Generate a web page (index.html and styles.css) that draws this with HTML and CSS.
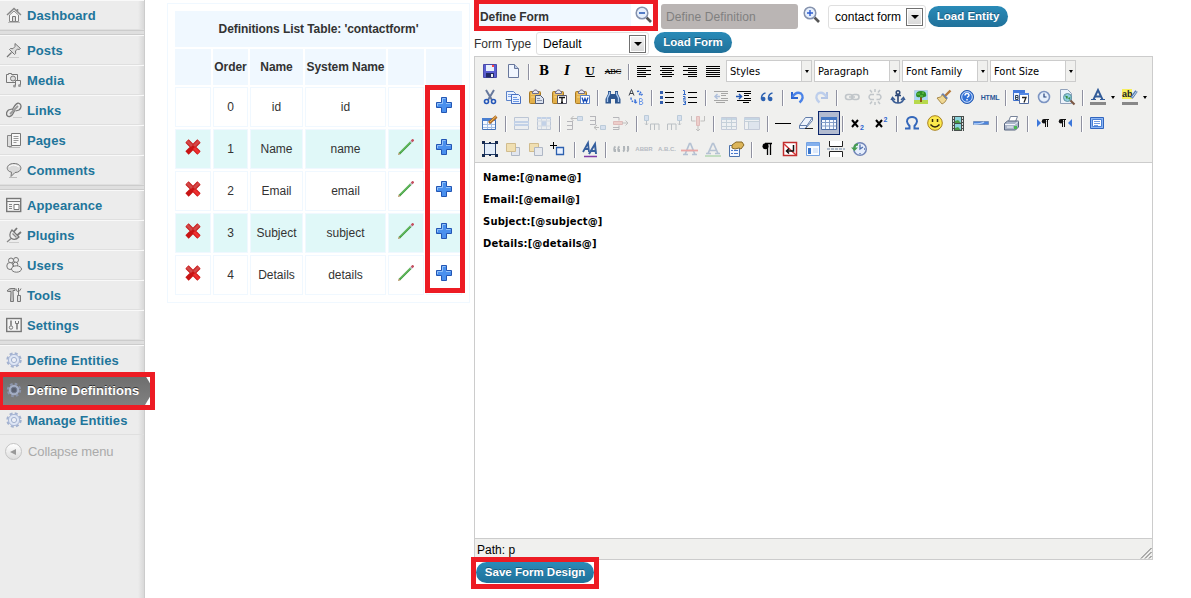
FILE: index.html
```html
<!DOCTYPE html>
<html lang="en">

<head>
    <meta charset="UTF-8">
    <title>Define Definitions</title>
    <link rel="stylesheet" href="styles.css">
</head>

<body>
    <svg class="defs">
        <symbol id="gear" viewBox="0 0 16 16">
            <circle cx="8" cy="8" r="6.5" fill="none" stroke="#a3b2d0" stroke-width="2.4" stroke-dasharray="2.9 2.2"/>
            <circle cx="8" cy="8" r="5.6" fill="#dde5f4" stroke="#a9b7d6"/>
            <circle cx="8" cy="8" r="2.6" fill="#eceff6" stroke="#a3b1cf"/>
        </symbol>
        <symbol id="del" viewBox="0 0 16 16">
            <path d="M2 2L14 14M14 2L2 14" stroke="#c81414" stroke-width="4.6"/>
            <path d="M2 2L7 7M14 2L9 7" stroke="#d24848" stroke-width="3"/>
            <path d="M9 9L14 14" stroke="#ee3030" stroke-width="3"/>
        </symbol>
        <symbol id="pencil" viewBox="0 0 16 16">
            <path d="M1.500 14.500L13 3" stroke="#3c9c3c" stroke-width="2.200"/>
            <path d="M2 13.500L12.500 3" stroke="#8fd684" stroke-width=".8"/>
            <path d="M12.500 3.500L14 2" stroke="#bfc5cf" stroke-width="2.400"/>
            <path d="M13.700 2.300L15.500 .5" stroke="#c65060" stroke-width="2.400"/>
            <path d="M0 16L.8 13.500 2.500 15.200Z" fill="#a98850"/>
        </symbol>
        <symbol id="plus" viewBox="0 0 16 16">
            <path d="M5.500 .5h5v5h5v5h-5v5h-5v-5h-5v-5h5z" fill="#4a90ee" stroke="#2356b4"/>
            <path d="M6.500 1.500h3M6.500 1.500v5h-5v2.500M10 6.500h4.500" fill="none" stroke="#92c1f8"/>
        </symbol>
        <symbol id="clip" viewBox="0 0 20 20">
            <rect x="3.500" y="4.500" width="11" height="12" rx="1" fill="#e3b04a" stroke="#a97a23"/>
            <path d="M5 7h8M5 10h4" stroke="#f8db8c"/>
            <path d="M6.500 6.500v-2h1l1-1.500h2l1 1.500h1v2z" fill="#e9e9f2" stroke="#706c88"/>
        </symbol>
    </svg>

    <div class="page">
        <div class="menu">
            <div class="item"><svg viewBox="0 0 16 16"><path d="M1 8L8 1.500 15 8M11.500 2v3" fill="none" stroke="#888" stroke-width="1.500"/><path d="M3.500 8L8 4 12.500 8v6.500h-9z" fill="#f5f5f5" stroke="#888"/><path d="M6.500 14V9.500h3V14" fill="#ddd" stroke="#777"/><path d="M2 15.500h12" stroke="#bbb"/></svg>Dashboard</div>
            <div class="sep"></div>
            <div class="item"><svg viewBox="0 0 16 16"><path d="M9 1.500l5.500 5-1.500 1-1.500-.5-2 2 .2 2.500-1.200 1L3.500 7.500l1-1 2.500.2L9 4.500z" fill="#ddd" stroke="#777"/><path d="M5.500 10.500L1 15" stroke="#777" stroke-width="1.300"/><path d="M3 15.500h10" stroke="#ccc"/></svg>Posts</div>
            <div class="item"><svg viewBox="0 0 16 16"><path d="M.5 2.500h2v-1h3v1h6v8h-11z" fill="#eee" stroke="#777"/><circle cx="7" cy="6.500" r="2.500" fill="#ddd" stroke="#777"/><path d="M9.500 14V8.500h5V13" fill="#eee" stroke="#777"/><circle cx="8.500" cy="14" r="1.500" fill="#999"/><circle cx="13.500" cy="13.500" r="1.500" fill="#999"/></svg>Media</div>
            <div class="item"><svg viewBox="0 0 16 16"><g fill="none"><path d="M6 8L9 3.500q3-4 5.500-1 1.500 3-1.500 5.500l-3.500 1" stroke="#777" stroke-width="1.300"/><path d="M9 8l-2.500 4.500q-3 3.500-5.500 1-1.500-3 1.500-5.500l3.500-1" stroke="#777" stroke-width="1.300"/><path d="M4 12l8-8" stroke="#999" stroke-width="1.800"/></g><path d="M7 15.500h9" stroke="#ccc"/></svg>Links</div>
            <div class="item"><svg viewBox="0 0 16 16"><path d="M1.500 3.500h4v11h-4z" fill="#ddd" stroke="#888"/><path d="M5.500 1.500h9v12h-9z" fill="#f8f8f8" stroke="#777"/><path d="M7.500 4.500h5M7.500 6.500h5M7.500 8.500h5M7.500 10.500h3" stroke="#999"/><path d="M3 15.500h11" stroke="#bbb"/></svg>Pages</div>
            <div class="item"><svg viewBox="0 0 16 16"><path d="M8 1.500c9 0 9 9 1 9L5 14.500l.5-4.300C-1 9 0 1.500 8 1.500z" fill="#dadada" stroke="#777"/><path d="M3 5q4-4 10 0" stroke="#fff" fill="none"/><path d="M3 15.500h8" stroke="#bbb"/></svg>Comments</div>
            <div class="sep"></div>
            <div class="item"><svg viewBox="0 0 16 16"><rect x=".7" y="1.500" width="14" height="13" fill="#f4f4f4" stroke="#777" stroke-width="1.400"/><path d="M1 4.500h14" stroke="#777"/><path d="M3 7.500h3M3 9.500h3M3 11.500h3" stroke="#888"/><path d="M8 7.500h5v5h-5z" fill="#fff" stroke="#777"/></svg>Appearance</div>
            <div class="item"><svg viewBox="0 0 16 16"><path d="M6 3l7 7c-2 2-5 3-7.500 1.500S3.500 6 6 3z" fill="#eee" stroke="#777" stroke-width="1.200"/><path d="M7.500 5L11 1M11 8.500L15 5" stroke="#777" stroke-width="1.800"/><path d="M6.500 6.500l4 4M5 11.500L1 15" stroke="#888" stroke-width="1.300"/><path d="M3 15.500h10" stroke="#ccc"/></svg>Plugins</div>
            <div class="item"><svg viewBox="0 0 16 16"><g fill="#eee" stroke="#777"><circle cx="5" cy="3.500" r="2.500"/><circle cx="10" cy="3" r="2.500"/><ellipse cx="4" cy="9" rx="3.200" ry="3.500"/><circle cx="9.500" cy="7.500" r="2.300"/><ellipse cx="10.500" cy="12" rx="5" ry="3.200"/></g></svg>Users</div>
            <div class="item"><svg viewBox="0 0 16 16"><path d="M1 4q1.500-2.500 4-2.500h4v2H7l.5 11h-3L5 4.500H3z" fill="#c8c8c8" stroke="#777"/><path d="M10 1.500q0 3 2 3t3-3M12.500 1v7" fill="none" stroke="#777"/><path d="M11.500 8.500h3v6h-3z" fill="#ddd" stroke="#777"/></svg>Tools</div>
            <div class="item"><svg viewBox="0 0 16 16"><rect x=".7" y="1.500" width="14.500" height="13" fill="#f4f4f4" stroke="#777" stroke-width="1.400"/><path d="M5 3.500v5M11 7v5.500" stroke="#777" stroke-width="1.500"/><circle cx="5" cy="10.500" r="1.700" fill="none" stroke="#777"/><path d="M9.500 4v2.500h3V4" fill="none" stroke="#777"/></svg>Settings</div>
            <div class="sep"></div>
            <div class="item"><svg><use href="#gear"/></svg>Define Entities</div>
            <div class="item active"><svg viewBox="0 0 16 16"><circle cx="8" cy="8" r="6.200" fill="none" stroke="#8a93ab" stroke-width="2" stroke-dasharray="2.700 2.170"/><circle cx="8" cy="8" r="5.300" fill="#a3adc4"/><circle cx="8" cy="8" r="2.800" fill="#5a6070" stroke="#70798c"/></svg>Define Definitions</div>
            <div class="item"><svg><use href="#gear"/></svg>Manage Entities</div>
            <div class="collapse"><span class="round"></span>Collapse menu</div>
            <div class="mark mark-menu"></div>
        </div>

        <div class="list">
            <table>
                <colgroup><col class="c1"><col class="c2"><col class="c3"><col class="c4"><col class="c1"><col class="c1"></colgroup>
                <tr><th colspan="6">Definitions List Table: 'contactform'</th></tr>
                <tr><th></th><th>Order</th><th>Name</th><th>System Name</th><th></th><th></th></tr>
                <tr><td></td><td>0</td><td>id</td><td>id</td><td></td><td><svg><use href="#plus"/></svg></td></tr>
                <tr class="alt"><td><svg><use href="#del"/></svg></td><td>1</td><td>Name</td><td>name</td><td><svg><use href="#pencil"/></svg></td><td><svg><use href="#plus"/></svg></td></tr>
                <tr><td><svg><use href="#del"/></svg></td><td>2</td><td>Email</td><td>email</td><td><svg><use href="#pencil"/></svg></td><td><svg><use href="#plus"/></svg></td></tr>
                <tr class="alt"><td><svg><use href="#del"/></svg></td><td>3</td><td>Subject</td><td>subject</td><td><svg><use href="#pencil"/></svg></td><td><svg><use href="#plus"/></svg></td></tr>
                <tr><td><svg><use href="#del"/></svg></td><td>4</td><td>Details</td><td>details</td><td><svg><use href="#pencil"/></svg></td><td><svg><use href="#plus"/></svg></td></tr>
            </table>
            <div class="mark mark-add"></div>
        </div>

        <div class="main">
            <div class="line top">
                <div class="define"><span>Define Form</span><svg viewBox="0 0 18 18"><path d="M11.500 11.500L16 16" stroke="#555" stroke-width="2.600"/><circle cx="7" cy="7" r="5.800" fill="#e6effc" stroke="#8592ad" stroke-width="1.500"/><path d="M4 7h6" stroke="#2f5fb8" stroke-width="1.600"/></svg></div>
                <div class="disabled">Define Definition</div>
                <svg class="zoom" viewBox="0 0 18 18"><path d="M11.500 11.500L16 16" stroke="#555" stroke-width="2.600"/><circle cx="7" cy="7" r="5.800" fill="#e6effc" stroke="#8592ad" stroke-width="1.500"/><path d="M4 7h6M7 4v6" stroke="#2f5fd0" stroke-width="1.400"/></svg>
                <div class="select entity">contact form<span class="drop"></span></div>
                <div class="button b-entity">Load Entity</div>
            </div>
            <div class="line second">
                <span class="label">Form Type</span>
                <div class="select type">Default<span class="drop"></span></div>
                <div class="button b-form">Load Form</div>
            </div>

            <div class="editor">
                <div class="toolbar">
                    <div class="row">
                        <svg viewBox="0 0 20 20"><path d="M3.500 3.500h13v13h-13z" fill="#5a5ed0" stroke="#4a4aa8"/><path d="M6 4h8v6H6z" fill="#e8f0fc"/><path d="M12 4h2v2h-2z" fill="#f44"/><path d="M6 12h8v4.500H6z" fill="#222a66"/><path d="M11 13h2v3h-2z" fill="#eee"/></svg>
                        <svg viewBox="0 0 20 20"><path d="M5.500 3.500h6l4 4v9h-10z" fill="#f1f6fe" stroke="#68779b"/><path d="M11.500 3.500v4h4" fill="#bccce8" stroke="#68779b"/></svg>
                        <i></i>
                        <b class="ch serif">B</b><b class="ch serif it">I</b><b class="ch serif un">U</b><b class="ch strike">ABC</b>
                        <i></i>
                        <svg viewBox="0 0 20 20"><path d="M3 5.500h14M3 7.500h9M3 9.500h14M3 11.500h9M3 13.500h14M3 15.500h9" stroke="#000"/></svg>
                        <svg viewBox="0 0 20 20"><path d="M3 5.500h14M5 7.500h10M3 9.500h14M5 11.500h10M3 13.500h14M5 15.500h10" stroke="#000"/></svg>
                        <svg viewBox="0 0 20 20"><path d="M3 5.500h14M8 7.500h9M3 9.500h14M8 11.500h9M3 13.500h14M8 15.500h9" stroke="#000"/></svg>
                        <svg viewBox="0 0 20 20"><path d="M3 5.500h14M3 7.500h14M3 9.500h14M3 11.500h14M3 13.500h14M3 15.500h14" stroke="#000"/></svg>
                        <div class="lb">Styles</div><div class="lb">Paragraph</div><div class="lb">Font Family</div><div class="lb">Font Size</div>
                    </div>
                    <div class="row">
                        <svg viewBox="0 0 20 20"><path d="M6 3l6 10M14 3L8 13" stroke="#66789c" stroke-width="2"/><circle cx="6.500" cy="14.500" r="2" fill="none" stroke="#2456b8" stroke-width="1.600"/><circle cx="13.500" cy="14.500" r="2" fill="none" stroke="#2456b8" stroke-width="1.600"/></svg>
                        <svg viewBox="0 0 20 20"><path d="M3.500 4.500h7l2 2v7h-9z" fill="#eaf2ff" stroke="#5a82c8"/><path d="M5 7.500h5M5 9.500h4" stroke="#7ba2e6"/><path d="M8.500 7.500h7l2 2v7h-9z" fill="#eaf2ff" stroke="#4870c0"/><path d="M10 10.500h4M10 12.500h6M10 14.500h6" stroke="#6d98e4"/></svg>
                        <svg viewBox="0 0 20 20"><use href="#clip"/><path d="M9.500 8.500h5l3 3v5h-8z" fill="#dde4f0" stroke="#4f5b78"/><path d="M11 11.500h3M11 13.500h5" stroke="#8792a8"/></svg>
                        <svg viewBox="0 0 20 20"><use href="#clip"/><path d="M8.500 8.500h9v8h-9z" fill="#fff" stroke="#556"/><path d="M10 10.500h6M13 10.500v5M12 15.500h2" stroke="#111" stroke-width="1.300"/></svg>
                        <svg viewBox="0 0 20 20"><use href="#clip"/><path d="M8.500 8.500h9v8h-9z" fill="#fff" stroke="#5b83c8"/><path d="M10 10.500l1.500 4.500 1.500-3.500 1.500 3.500 1.500-4.500" fill="none" stroke="#1a4fb8" stroke-width="1.300"/></svg>
                        <i></i>
                        <svg viewBox="0 0 20 20"><path d="M5 4h3v3h4V4h3v3l2.500 5v4.500h-5.500V12H8v4.500H2.500V12L5 7z" fill="#2d568f"/><path d="M6.500 5v2L4.500 11v4M13.500 5v2l2 4v4" fill="none" stroke="#a7c6ee" stroke-width="1.300"/></svg>
                        <svg viewBox="0 0 20 20"><path d="M3 8.500L5.500 2.500 8 8.500M4 6.500h3" stroke="#3d434d" fill="none"/><path d="M13.500 11.500v6h2.500q2-1.500 0-3h-2.500 2q2-1.500 0-3z" fill="none" stroke="#6f9ae8"/><path d="M11 4.500q4-1 4 3M13 6.500l2 2 2-2M5 10.500q0 5 5 4.500M8.500 12.500l2 2.500-2 2" fill="none" stroke="#3970d8" stroke-width="1.400" stroke-dasharray="2 1"/></svg>
                        <i></i>
                        <svg viewBox="0 0 20 20"><path d="M8 5.500h9M8 10.500h9M8 15.500h9" stroke="#000"/><path d="M3 4h3v3H3zM3 9h3v3H3zM3 14h3v3H3z" fill="#345fae"/></svg>
                        <svg viewBox="0 0 20 20"><path d="M8 5.500h9M8 10.500h9M8 15.500h9" stroke="#000"/><path d="M3 3.500h1.500v4M3 7.500h3M3 9.500h2v1.500l-2 1h3M3 14h2.500v3.500H3M4 15.700h1" fill="none" stroke="#346ac8"/></svg>
                        <i></i>
                        <svg class="off" viewBox="0 0 20 20"><path d="M3 4.500h14M10 6.500h7M10 8.500h5M10 11.500h7M3 13.500h14M5 15.500h9" stroke="#000"/><path d="M9 9.500H4M6.500 7L4 9.500 6.500 12" fill="none" stroke="#2459b5" stroke-width="1.500"/></svg>
                        <svg viewBox="0 0 20 20"><path d="M3 4.500h14M10 6.500h7M10 8.500h5M10 11.500h7M3 13.500h14M9 15.500h6" stroke="#000" stroke-width="1.200"/><path d="M2 9.500h5M5 7l2.500 2.500L5 12" fill="none" stroke="#2459b5" stroke-width="1.500"/></svg>
                        <svg viewBox="0 0 20 20"><path d="M8.500 6Q4 7 4.500 12.500M15.500 6Q11 7 11.500 12.500" fill="none" stroke="#2d62b2" stroke-width="1.400"/><circle cx="6.300" cy="12" r="2.200" fill="#2d62b2"/><circle cx="13.300" cy="12" r="2.200" fill="#2d62b2"/></svg>
                        <i></i>
                        <svg viewBox="0 0 20 20"><path d="M4 5v6h6" fill="none" stroke="#2c65d2" stroke-width="2"/><path d="M4.500 10Q8 4 13 6.500q4 4-1.500 9" fill="none" stroke="#4b83e8" stroke-width="2.400"/></svg>
                        <svg class="off" viewBox="0 0 20 20"><path d="M16 5v6h-6" fill="none" stroke="#2c65d2" stroke-width="2"/><path d="M15.500 10Q12 4 7 6.500q-4 4 1.500 9" fill="none" stroke="#4b83e8" stroke-width="2.400"/></svg>
                        <i></i>
                        <svg class="off" viewBox="0 0 20 20"><rect x="3.500" y="7.500" width="7" height="5" rx="2.500" fill="none" stroke="#567" stroke-width="1.600"/><rect x="10" y="7.500" width="7" height="5" rx="2.500" fill="none" stroke="#567" stroke-width="1.600"/><path d="M7 10h6" stroke="#567" stroke-width="1.500"/></svg>
                        <svg class="off" viewBox="0 0 20 20"><path d="M9 7.500H5.500q-3 2.500 0 5H9M11.500 7.500h3q3 2.500 0 5h-3M10 2v3M5 3l2 2.500M15 3l-2 2.500M10 15v3M5 17l2-2.500M15 17l-2-2.500" fill="none" stroke="#567" stroke-width="1.500"/></svg>
                        <svg viewBox="0 0 20 20"><circle cx="10" cy="5.500" r="1.800" fill="none" stroke="#2d4877" stroke-width="1.500"/><path d="M10 7v9M7 8.500h6" stroke="#2d4877" stroke-width="1.600"/><path d="M4 11q1 5 6 5t6-5M3 13l1.500-2.500L7 13M13 13l2.500-2.500L17 13" fill="none" stroke="#3a5d95" stroke-width="1.400"/></svg>
                        <svg viewBox="0 0 20 20"><path d="M3.500 3.500h13v13h-13z" fill="#a9d6f8" stroke="#b9cfe0"/><path d="M3 13h14v4H3z" fill="#b7d94c"/><path d="M9 8h2v7H9z" fill="#8a5418"/><path d="M5 8q0-4 5-4t5 3q1 3-2 3-2 1.500-4 0-4 1-4-2z" fill="#2f8f26"/><path d="M6 7h3M11 6h2M9 9h3" stroke="#76cf51"/></svg>
                        <svg viewBox="0 0 20 20"><path d="M16.500 3.500L11 9" stroke="#b67b3a" stroke-width="2.400"/><path d="M8 7l5 5" stroke="#6580b4" stroke-width="2.600"/><path d="M3 11q4-.5 5.500-3l4 4.500Q11 16 8 17z" fill="#f0d893" stroke="#a98b4c"/></svg>
                        <svg viewBox="0 0 20 20"><circle cx="10" cy="10" r="6.500" fill="#3271d6" stroke="#2458ae"/><circle cx="10" cy="10" r="5.300" fill="none" stroke="#cfe1fc"/><path d="M8 8.500q0-2 2-2t2 2q0 .8-2 2M10 12v1.500" fill="none" stroke="#fff" stroke-width="1.400"/></svg>
                        <b class="ch html">HTML</b>
                        <i></i>
                        <svg viewBox="0 0 20 20"><path d="M2.500 3.500h11v10h-11z" fill="#ecf3fe" stroke="#3d6fca"/><path d="M2 3h12v3H2z" fill="#4278db"/><path d="M8.500 6.500h9v10h-9z" fill="#fff" stroke="#516b9f"/><path d="M8 6h10v2H8z" fill="#5488e5"/><path d="M11 10.500h4l-2 5" stroke="#222" fill="none" stroke-width="1.300"/><path d="M4.500 8.500h2.500v4H4.500zM4.500 10.500H7" stroke="#345" fill="none"/></svg>
                        <svg viewBox="0 0 20 20"><circle cx="10" cy="10" r="5.500" fill="#e7f0fc" stroke="#7d95c2" stroke-width="1.600"/><path d="M10 6.500V10h2.500" fill="none" stroke="#24427b" stroke-width="1.200"/></svg>
                        <svg viewBox="0 0 20 20"><path d="M3.500 2.500h7l4 4v10h-11z" fill="#edf3fb" stroke="#91a1ba"/><circle cx="10.500" cy="10.500" r="4" fill="#8fd0e0" stroke="#5f8fa0"/><path d="M8 8.500l3 1-1 3zM11 11l2.500-1-1 3z" fill="#358b3c"/><path d="M13.500 13.500l4 4" stroke="#7b5845" stroke-width="2.200"/></svg>
                        <i></i>
                        <div class="color"><svg viewBox="0 0 20 20"><path d="M5.500 12.500L10 3l4.500 9.500M7 9.500h6" stroke="#315b98" stroke-width="1.900" fill="none"/><path d="M3 12.500h5M12 12.500h5" stroke="#315b98"/><path d="M2 15h16v3H2z" fill="#888"/></svg></div>
                        <div class="color"><svg viewBox="0 0 20 20"><path d="M2 2h10v10H2z" fill="#f6ee5c"/><text x="2" y="10" class="ab">ab</text><path d="M16.500 4l-5 7" stroke="#567cae" stroke-width="3"/><path d="M16.500 4.500l-4.500 6" stroke="#c5d8f0"/><path d="M2 15h16v3H2z" fill="#888"/></svg></div>
                    </div>
                    <div class="row">
                        <svg viewBox="0 0 20 20"><path d="M2.500 5.500h13v11h-13z" fill="#f5f9ff" stroke="#4573b8"/><path d="M2 5h14v3H2z" fill="#4a7fd0"/><path d="M3 11.500h12M3 14.500h12M7.500 8v8M11.500 8v8" stroke="#a4bfe5"/><path d="M16.500 3.500L9 10" stroke="#b26c26" stroke-width="3"/><path d="M16 3.500L10 9" stroke="#f2c45f"/></svg>
                        <i></i>
                        <svg class="off" viewBox="0 0 20 20"><path d="M3.500 4.500h14v12h-14z" fill="#e4eaf5" stroke="#48689d"/><path d="M3 8h15v5H3z" fill="#5b8bda"/><path d="M4 10.500h13" stroke="#dce7fb"/></svg>
                        <svg class="off" viewBox="0 0 20 20"><path d="M3.500 4.500h13v12h-13z" fill="#e4eaf5" stroke="#48689d"/><path d="M7 8h6v5H7zM3 4h14v2H3z" fill="#5b8bda"/><path d="M3 8h14M3 13h14M7.500 4v12M12.500 4v12" stroke="#8fa9d3"/></svg>
                        <i></i>
                        <svg class="off" viewBox="0 0 20 20"><path d="M2 8.500h5M2 12.500h5M2 16.500h5.500V8" stroke="#334" fill="none"/><path d="M6 5.500h6M8.500 3L6 5.500 8.500 8" stroke="#444" fill="none"/><path d="M12.500 3.500h5v4h-5z" fill="#9bbcf0" stroke="#47a"/></svg>
                        <svg class="off" viewBox="0 0 20 20"><path d="M2 3.500h5M2 7.500h5M2 11.500h5.500V3" stroke="#334" fill="none"/><path d="M6 14.500h5M9 12l-3 2.500L9 17" stroke="#444" fill="none"/><path d="M12.500 12.500h5v4h-5z" fill="#9bbcf0" stroke="#47a"/></svg>
                        <svg class="off" viewBox="0 0 20 20"><path d="M2 4.500h6v3M2 16.500h6v-4M2 14.500h6" stroke="#334" fill="none"/><path d="M2.500 8.500h9v3h-9z" fill="#e78378" stroke="#b44"/><path d="M11 10h6M14.500 7.500L17 10l-2.500 2.500" stroke="#555" fill="none"/></svg>
                        <i></i>
                        <svg class="off" viewBox="0 0 20 20"><path d="M2.500 2.500h4v5h-4z" fill="#9bbcf0" stroke="#47a"/><path d="M4.500 8v4M3 10.500L4.500 12 6 10.500M8.500 17v-6H17v6M12.500 11v6" fill="none" stroke="#456"/></svg>
                        <svg class="off" viewBox="0 0 20 20"><path d="M12.500 2.500h4v5h-4z" fill="#9bbcf0" stroke="#47a"/><path d="M14.500 8v4M13 10.500l1.500 1.500 1.500-1.500M2.500 17v-6H11v6M6.500 11v6" fill="none" stroke="#456"/></svg>
                        <svg class="off" viewBox="0 0 20 20"><path d="M3.500 3v5h4M16.500 3v5h-4M8 16l2 2 2-2M10 13v5" fill="none" stroke="#555"/><path d="M8.500 3.500h3v9h-3z" fill="#e78378" stroke="#b44"/></svg>
                        <i></i>
                        <svg class="off" viewBox="0 0 20 20"><path d="M2.500 4.500h15v12h-15z" fill="#eaf1fc" stroke="#67a"/><path d="M2 5h15v2H2z" fill="#69c"/><path d="M2 9.500h15M2 13.500h15M7.500 5v12M12.500 5v12" stroke="#68a"/></svg>
                        <svg class="off" viewBox="0 0 20 20"><path d="M2.500 4.500h15v12h-15z" fill="#eaf1fc" stroke="#67a"/><path d="M2 5h15v2H2z" fill="#69c"/><path d="M2 8.500h15M6.500 8v8" stroke="#68a"/><path d="M7 9h10v7H7z" fill="#b8cbed"/></svg>
                        <i></i>
                        <svg viewBox="0 0 20 20"><path d="M2 10.500h16" stroke="#000"/></svg>
                        <svg viewBox="0 0 20 20"><path d="M3.500 12.500l6-8h7L11 12.500zM3.500 12.500v3h6l1.500-3M16.500 4.500v3l-7 8" fill="#edf3fc" stroke="#617ca9"/><path d="M9 15.500h8" stroke="#222"/></svg>
                        <svg class="on" viewBox="0 0 20 20"><path d="M2.500 4.500h15v12h-15z" fill="#f7faff" stroke="#4e6da5"/><path d="M2 4h16v3H2z" fill="#4478c5"/><path d="M2 9.500h15M2 13h15M6.500 7v9M10.500 7v9M14.500 7v9" stroke="#849ec9"/></svg>
                        <i></i>
                        <svg viewBox="0 0 20 20"><path d="M4 7l6 7M10 7l-6 7" stroke="#000" stroke-width="2"/><text x="12" y="17" class="two">2</text></svg>
                        <svg viewBox="0 0 20 20"><path d="M5 7l6 7M11 7l-6 7" stroke="#000" stroke-width="2"/><text x="12.500" y="9" class="two">2</text></svg>
                        <i></i>
                        <svg viewBox="0 0 20 20"><path d="M3 15.500h4.500V13Q3 8 6.500 5q3.500-2 7 0 3.500 3-1 8v2.500H17" fill="none" stroke="#3467ba" stroke-width="2"/></svg>
                        <svg viewBox="0 0 20 20"><circle cx="10" cy="10" r="7.300" fill="#fce94d" stroke="#a8801d"/><path d="M7.500 6v3M12.500 6v3M5.500 11.500q4.500 5 9 0" fill="none" stroke="#34280e" stroke-width="1.500"/></svg>
                        <svg viewBox="0 0 20 20"><path d="M4 3h12v15H4z" fill="#474f4c"/><path d="M7 4h6v6H7zM7 11h6v6H7z" fill="#8bd4dd"/><path d="M7 8l3-1 3 3H7zM7 15l3-1 3 3H7z" fill="#4c9b42"/><path d="M5.500 4v14M14.500 4v14" stroke="#ddd" stroke-dasharray="2 1"/></svg>
                        <svg viewBox="0 0 20 20"><path d="M2.500 8.500h15v3h-15z" fill="#4c84dc" stroke="#7592bf"/><path d="M3 11q7 0 10-2" stroke="#b8d5fb" fill="none" stroke-width="1.500"/></svg>
                        <i></i>
                        <svg viewBox="0 0 20 20"><path d="M6.500 8.500l2-5h7l-2 5" fill="#fff" stroke="#778398"/><path d="M2.500 10.500l3-2.500h11v6l-3 3h-11z" fill="#aab5c9" stroke="#56647e"/><path d="M3 11.500h10l3-3M5 14h6" stroke="#f5f7fb" fill="none"/><path d="M12 13h3v3h-3z" fill="#4abb52"/></svg>
                        <i></i>
                        <svg viewBox="0 0 20 20"><path d="M4 6l4 4-4 4z" fill="#3c77da"/><path d="M11 6.500h5M12.500 6v8M14.500 6v8" stroke="#111"/><circle cx="11" cy="8.300" r="2.200" fill="#111"/></svg>
                        <svg viewBox="0 0 20 20"><path d="M16 6l-4 4 4 4z" fill="#3c77da"/><path d="M5 6.500h5M6.500 6v8M8.500 6v8" stroke="#111"/><circle cx="5" cy="8.300" r="2.200" fill="#111"/></svg>
                        <i></i>
                        <svg viewBox="0 0 20 20"><path d="M3.500 4.500h13v11h-13z" fill="#8cb6f4" stroke="#3165be"/><path d="M5.500 6.500h9v7h-9z" fill="#fff" stroke="#4a80d4"/><path d="M7 8.500h6M7 10.500h6M7 12.500h4" stroke="#6f9ce4"/></svg>
                    </div>
                    <div class="row">
                        <svg viewBox="0 0 20 20"><path d="M4.500 4.500h11v11h-11z" fill="#e3edf9" stroke="#223c68"/><path d="M2 2h3v3H2zM15 2h3v3h-3zM2 15h3v3H2zM15 15h3v3h-3zM9 3h2v2H9zM9 15h2v2H9z" fill="#152a50"/></svg>
                        <svg class="half" viewBox="0 0 20 20"><path d="M8.500 8.500h8v8h-8z" fill="#dde3ee" stroke="#94a0b4"/><path d="M3.500 4.500h9v8h-9z" fill="#f1d898" stroke="#c5a765"/></svg>
                        <svg class="half" viewBox="0 0 20 20"><path d="M3.500 4.500h9v8h-9z" fill="#f1d898" stroke="#c5a765"/><path d="M8.500 8.500h8v8h-8z" fill="#e3e7ef" stroke="#94a0b4"/></svg>
                        <svg viewBox="0 0 20 20"><path d="M1 6.500h7M4.500 3v7" stroke="#000"/><path d="M7.500 8.500h7v7h-7z" fill="#e8f1ff" stroke="#2d60af" stroke-width="1.300"/></svg>
                        <i></i>
                        <svg viewBox="0 0 20 20"><path d="M3 13L8 4l1 9M5 10h4" fill="none" stroke="#355f9e" stroke-width="1.800"/><path d="M9 15l6-10 1 10M11 12h5" fill="none" stroke="#355f9e" stroke-width="2"/><path d="M4 17.500h13" stroke="#813aa6" stroke-width="1.500"/></svg>
                        <i></i>
                        <svg class="off" viewBox="0 0 20 20"><path d="M4.500 7.500q-2 1-1 5M8.500 7.500q-2 1-1 5M12 12.500q2-1 1-5M16 12.500q2-1 1-5" fill="none" stroke="#234" stroke-width="1.800"/><path d="M3 10h2v3H3zM7 10h2v3H7zM12 7h2v3h-2zM16 7h2v3h-2z" fill="#234"/></svg>
                        <b class="ch tiny">ABBR</b><b class="ch tiny">A.B.C.</b>
                        <svg class="off" viewBox="0 0 20 20"><path d="M5 15.500L9.500 4.500h1L15 15.500M6 11.500h8M3 15.500h5M12 15.500h5" stroke="#315b98" stroke-width="1.700" fill="none"/><path d="M1 11.500h17" stroke="#e00000" stroke-width="1.800"/></svg>
                        <svg class="off" viewBox="0 0 20 20"><path d="M5 14.500L9.500 4.500h1L15 14.500M6 11.500h8M3 14.500h5M12 14.500h5" stroke="#315b98" stroke-width="1.700" fill="none"/><path d="M2 17h16" stroke="#2ba02b" stroke-width="1.500"/></svg>
                        <svg viewBox="0 0 20 20"><path d="M3.500 6.500h10v11h-10z" fill="#f3f7ff" stroke="#4c72ab"/><path d="M5 11.500h2M8 11.500h4M5 14.500h2M8 14.500h4" stroke="#4a7acd"/><path d="M6 6l4-3h6l2 3-3 4-2-1-4 1-3-1z" fill="#dcb559" stroke="#876825"/></svg>
                        <i></i>
                        <svg viewBox="0 0 20 20"><path d="M8 4.500h7M10.500 4v12M13.500 4v12" stroke="#000" stroke-width="1.300"/><circle cx="8.500" cy="7.300" r="3" fill="#000"/></svg>
                        <svg viewBox="0 0 20 20"><path d="M3.500 3.500h13v13h-13z" fill="#fff" stroke="#c22e2e" stroke-width="1.500"/><path d="M4 5l12 11" stroke="#d43636" stroke-width="1.500"/><path d="M13.500 6v6H7M9 9.500L6.500 12 9 14.500" stroke="#111" fill="none" stroke-width="1.500"/></svg>
                        <svg viewBox="0 0 20 20"><path d="M3.500 3.500h13v13h-13z" fill="#f8fbff" stroke="#74a2e2"/><path d="M4 4h12v3H4z" fill="#84b0ed"/><path d="M5 9h3v6H5z" fill="#3975cb"/><path d="M10 9h5v5h-5z" fill="#dce8fa"/></svg>
                        <svg viewBox="0 0 20 20"><path d="M3.500 2v5.500h13V2M3.500 18v-5.500h13V18" fill="#fff" stroke="#222"/><path d="M1 10h18" stroke="#6e87a8" stroke-dasharray="3 1"/></svg>
                        <svg viewBox="0 0 20 20"><circle cx="11" cy="10" r="6.300" fill="#e6eefc" stroke="#7185b7" stroke-width="1.500"/><path d="M11 5.500V10l3-2M15 10h1M11 14v1" fill="none" stroke="#5270ad" stroke-width="1.300"/><path d="M9 4.500q-4.500 0-4.500 4H2l3.500 3.500L9 8.500H6.500q0-2 2.500-2z" fill="#469e50"/></svg>
                    </div>
                </div>
                <div class="content">
                    <p>Name:[@name@]</p>
                    <p>Email:[@email@]</p>
                    <p>Subject:[@subject@]</p>
                    <p>Details:[@details@]</p>
                </div>
                <div class="status"><span>Path: p</span><svg viewBox="0 0 12 12"><path d="M1 11.500L11.500 1M5 11.500L11.500 5M9 11.500l2.500-2.500" stroke="#666"/></svg></div>
            </div>

            <div class="save">
                <div class="button b-save">Save Form Design</div>
            </div>
        </div>
    </div>
</body>

</html>
```

FILE: styles.css
```css
body {
    margin: 0;
    background: #fff;
    color: #333;
    font-family: Arial, "Liberation Sans", sans-serif;
    font-size: 12px;
    overflow: hidden;
}

.defs {
    position: absolute;
    width: 0;
    height: 0;
}

.page {
    display: flex;
    align-items: flex-start;
    height: 598px;
}

/* left menu */
.menu {
    position: relative;
    flex: none;
    box-sizing: border-box;
    width: 145px;
    height: 598px;
    border-right: 1px solid #ccc;
    background: linear-gradient(to left, #d8d8d8, #ececec 6px);
}

.item {
    display: flex;
    align-items: center;
    box-sizing: border-box;
    height: 30px;
    padding-left: 6px;
    border-top: 1px solid #f9f9f9;
    border-bottom: 1px solid #dfdfdf;
    color: #21759b;
    font-size: 13px;
    font-weight: bold;
    letter-spacing: .1px;
}

.item svg {
    width: 16px;
    height: 16px;
    margin-right: 5px;
}

.sep {
    box-sizing: border-box;
    height: 5px;
    border-top: 1px solid #ccc;
    border-bottom: 1px solid #ccc;
    background: #dfdfdf;
}

.active {
    width: 151px;
    border: none;
    background: linear-gradient(#6d6d6d, #808080);
    color: #fff;
    text-shadow: 0 -1px 0 #333;
    clip-path: polygon(0 0, 145px 0, 151px 10px, 151px 20px, 145px 100%, 0 100%);
}

.collapse {
    display: flex;
    align-items: center;
    height: 33px;
    padding-left: 5px;
    color: #aaa;
    font-size: 13px;
    letter-spacing: -.1px;
}

.round {
    display: flex;
    align-items: center;
    justify-content: center;
    box-sizing: border-box;
    width: 17px;
    height: 17px;
    margin-right: 6px;
    border: 1px solid #c4c4c4;
    border-radius: 50%;
    background: linear-gradient(#fff, #ddd);
}

.round::before {
    content: "";
    margin-right: 2px;
    border: 3.5px solid transparent;
    border-left: none;
    border-right: 6px solid #999;
}

.mark {
    position: absolute;
    box-sizing: border-box;
    border: 5px solid #ed1c24;
}

.mark-menu {
    left: -2px;
    top: 372px;
    width: 157px;
    height: 38px;
}

.mark-add {
    left: 257px;
    top: 81px;
    width: 40px;
    height: 208px;
}

/* definitions table */
.list {
    position: relative;
    flex: none;
    margin: 3px 0 0 22px;
    padding: 5px;
    border: 1px solid #f0f8ff;
}

.list table {
    width: 291px;
    table-layout: fixed;
    border-spacing: 2px;
}

.list th,
.list td {
    box-sizing: border-box;
    padding: 0;
    text-align: center;
    white-space: nowrap;
}

.list th {
    height: 36px;
    background: #f0f8ff;
    letter-spacing: -.08px;
}

.list td {
    height: 40px;
    border: 1px solid #f0f8ff;
}

.alt td {
    background: #e0f8f8;
}

.list td svg {
    display: block;
    width: 16px;
    height: 16px;
    margin: -4px auto 0;
}

.c1 { width: 36px; }
.c2 { width: 35px; }
.c3 { width: 53px; }
.c4 { width: 81px; }

/* form header */
.main {
    flex: none;
    width: 679px;
    margin-left: 4px;
}

.line {
    display: flex;
    align-items: flex-start;
}

.top {
    height: 31px;
}

.define {
    display: flex;
    box-sizing: border-box;
    width: 184px;
    height: 32px;
    margin-top: -1px;
    border: 5px solid #ed1c24;
    font-weight: bold;
    letter-spacing: -.1px;
}

.define span {
    width: 151px;
    padding-left: 1px;
    background: #f0f8ff;
    line-height: 26px;
}

.define svg {
    width: 18px;
    height: 18px;
    margin: 2px 0 0 4px;
}

.disabled {
    box-sizing: border-box;
    width: 137px;
    height: 25px;
    margin: 4px 5px 0 3px;
    padding-left: 5px;
    border-radius: 3px;
    background: #bab5b4;
    color: #808080;
    line-height: 26px;
    letter-spacing: .1px;
}

.zoom {
    width: 18px;
    height: 18px;
    margin: 6px 7px 0 0;
}

.select {
    display: flex;
    align-items: center;
    justify-content: space-between;
    box-sizing: border-box;
    padding: 0 2px 0 6px;
    border: 1px solid #dfdfdf;
    border-radius: 3px;
    color: #000;
}

.entity {
    width: 98px;
    height: 24px;
    margin: 5px 2px 0 0;
}

.type {
    width: 113px;
    height: 23px;
    margin: 1px 5px 0 4px;
    line-height: 12px;
    letter-spacing: .1px;
}

.drop {
    display: flex;
    align-items: center;
    justify-content: center;
    box-sizing: border-box;
    width: 17px;
    height: 18px;
    border: 1px solid #707070;
    background: linear-gradient(#f4f4f4, #d8d8d8);
    box-shadow: inset 0 0 0 1px #fff;
}

.drop::before {
    content: "";
    border: 4px solid transparent;
    border-top-color: #000;
    border-bottom: none;
}

.second {
    height: 25px;
}

.label {
    width: 58px;
    line-height: 26px;
}

.button {
    height: 21px;
    border-radius: 11px;
    background: linear-gradient(#2a8bb8, #20719a);
    color: #fff;
    font-size: 11.5px;
    font-weight: bold;
    line-height: 21px;
    text-align: center;
    text-shadow: 0 -1px 0 #1a5a7c;
    white-space: nowrap;
}

.b-entity {
    width: 80px;
    margin-top: 6px;
}

.b-form {
    width: 78px;
    margin-top: 1px;
}

/* editor */
.editor {
    box-sizing: border-box;
    width: 679px;
    height: 504px;
    border: 1px solid #ccc;
}

.toolbar {
    box-sizing: border-box;
    height: 106px;
    padding: 1px 0 0 5px;
    border-bottom: 1px solid #ccc;
    background: #f0f0ee;
}

.row {
    display: flex;
    align-items: center;
    height: 26px;
}

.row svg {
    flex: none;
    width: 20px;
    height: 20px;
    margin-right: 3px;
}

.row i {
    box-sizing: border-box;
    width: 2px;
    height: 16px;
    margin: 1px 4px 0 2px;
    border-left: 1px solid #8f91a0;
    border-right: 1px solid #fff;
}

.row .off {
    opacity: .3;
}

.row .half {
    opacity: .7;
}

.row .on {
    padding: 1px 0;
    margin: 0 2px 0 -1px;
    border: 1px solid #0a246a;
    background: #b2bbd0;
}

.row .on + i {
    margin-left: 0;
}

.ch {
    width: 20px;
    margin-right: 3px;
    color: #000;
    text-align: center;
}

.serif {
    font: bold 12px "DejaVu Serif", serif;
}

.it {
    font-style: italic;
}

.un {
    text-decoration: underline;
    font-size: 11px;
}

.strike {
    font: 8px "DejaVu Serif", serif;
    letter-spacing: -.5px;
    text-decoration: line-through;
}

.html {
    color: #2b5797;
    font-size: 7px;
    letter-spacing: -.2px;
}

.tiny {
    color: #b5bac2;
    font-size: 6px;
}

.lb {
    position: relative;
    box-sizing: border-box;
    width: 86px;
    height: 22px;
    margin: 0 2px 0 0;
    padding-left: 3px;
    border: 1px solid #ccc;
    background: linear-gradient(to left, #f0f0ee 9px, #ccc 9px, #ccc 10px, #fff 10px);
    color: #000;
    font: 11px/21px "DejaVu Sans Condensed", "DejaVu Sans", sans-serif;
    font-stretch: condensed;
    letter-spacing: 0;
}

.lb::after,
.color::after {
    content: "";
    border: 2.5px solid transparent;
    border-top: 3px solid #000;
    border-bottom: none;
}

.lb::after {
    position: absolute;
    right: 2px;
    top: 9px;
}

.color {
    display: flex;
    align-items: center;
    width: 32px;
}

.ab {
    fill: #222;
    font: bold 9px Arial, "Liberation Sans", sans-serif;
}

.two {
    fill: #2d64ce;
    font: bold 7px Arial, "Liberation Sans", sans-serif;
}

.content {
    height: 375px;
    padding-left: 8px;
    color: #000;
    font: bold 10px/14px Verdana, "DejaVu Sans", sans-serif;
    letter-spacing: .15px;
}

.content p {
    margin: 0 0 8px;
}

.content p:first-child {
    padding-top: 8px;
}

.status {
    display: flex;
    align-items: center;
    justify-content: space-between;
    height: 20px;
    padding-left: 2px;
    border-top: 1px solid #ccc;
    background: #f0f0ee;
    color: #000;
}

.status span {
    padding-top: 2px;
}

.status svg {
    align-self: flex-end;
    width: 12px;
    height: 12px;
}

.save {
    position: relative;
    box-sizing: border-box;
    width: 128px;
    height: 32px;
    margin: -3px 0 0 -3px;
    border: 5px solid #ed1c24;
    background: #fff;
}
```
